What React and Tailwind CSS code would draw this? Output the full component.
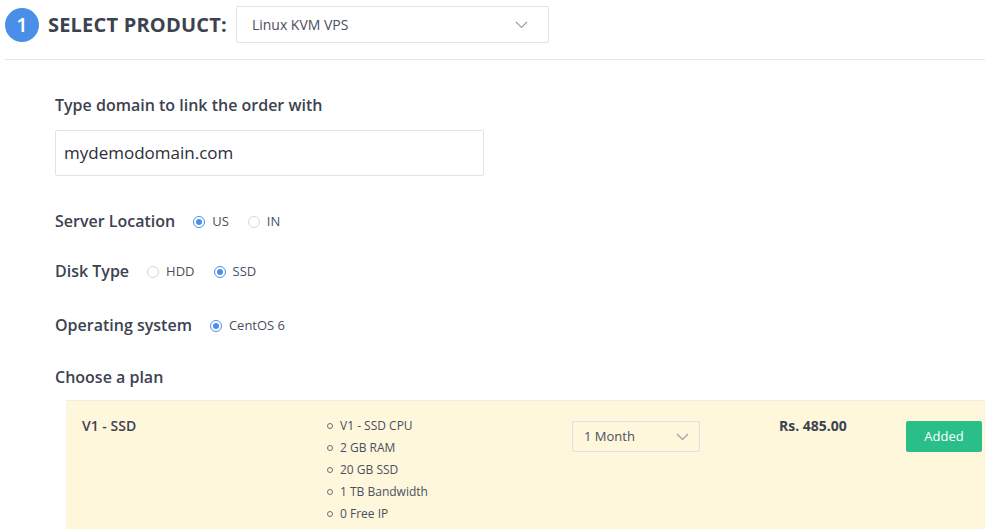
import React from 'react';

const Chevron = ({ className = '' }) => (
  <svg className={className} width="13" height="8" viewBox="0 0 13 8" fill="none">
    <path d="M1 1l5.5 5.5L12 1" stroke="#9aa0ab" strokeWidth="1.2" />
  </svg>
);

const Radio = ({ checked, label }) => (
  <label className="flex items-center gap-[7px] text-[13px] text-[#4a5060] pt-[1px]">
    <span
      className={`flex items-center justify-center w-[12px] h-[12px] rounded-full border ${
        checked ? 'border-[#4a8fe7]' : 'border-[#d4d6da]'
      } bg-white`}
    >
      {checked && <span className="w-[6px] h-[6px] rounded-full bg-[#4a8fe7]" />}
    </span>
    {label}
  </label>
);

const Row = ({ label, children, className = '' }) => (
  <div className={`flex items-center h-[20px] ${className}`}>
    <span className="text-[16px] font-semibold text-[#3d4250] mr-[18px]">{label}</span>
    <div className="flex items-center gap-[19px]">{children}</div>
  </div>
);

const features = ['V1 - SSD CPU', '2 GB RAM', '20 GB SSD', '1 TB Bandwidth', '0 Free IP'];

export default function App() {
  return (
    <div className="w-[985px] h-[529px] overflow-hidden bg-white font-['Open_Sans',sans-serif] text-[#3d4250]">
      {/* header */}
      <div className="flex items-center pl-[5px] pt-[6px]">
        <div className="w-[34px] h-[34px] rounded-full bg-[#4a8fe7] text-white flex items-center justify-center text-[20px] font-semibold">
          1
        </div>
        <h1 className="ml-[9px] text-[20px] font-bold tracking-[0.2px] uppercase text-[#3d4250]">Select Product:</h1>
        <div className="ml-[9px] w-[313px] h-[37px] border border-[#dfe1e5] rounded-[2px] flex items-center justify-between pl-[15px] pr-[20px] text-[14px] text-[#4a5060]">
          <span>Linux KVM VPS</span>
          <Chevron />
        </div>
      </div>
      <div className="ml-[5px] mt-[16px] border-t border-[#e5e6e8]" />

      <div className="pl-[55px] pt-[35px]">
        <div className="text-[16px] font-semibold h-[20px] leading-[20px]">Type domain to link the order with</div>
        <div className="mt-[15px] w-[429px] h-[46px] border border-[#e0e2e6] rounded-[2px] flex items-center pl-[8px] text-[17px] text-[#2b2f38]">
          mydemodomain.com
        </div>

        <Row label="Server Location" className="mt-[35px]">
          <Radio checked label="US" />
          <Radio label="IN" />
        </Row>
        <Row label="Disk Type" className="mt-[30px]">
          <Radio label="HDD" />
          <Radio checked label="SSD" />
        </Row>
        <Row label="Operating system" className="mt-[34px]">
          <Radio checked label="CentOS 6" />
        </Row>

        <div className="mt-[32px] h-[20px] leading-[20px] text-[16px] font-semibold">Choose a plan</div>

        <div className="ml-[11px] mt-[13px] bg-[#fef7dc] border-t border-[#efede4] flex pt-[13px] pb-[20px] pl-[16px]">
          <div className="w-[245px] text-[14px] font-semibold leading-[22px] pt-[1px]">V1 - SSD</div>
          <ul className="w-[245px] text-[12px] text-[#4a5060] pt-[1px]">
            {features.map((f) => (
              <li key={f} className="flex items-center h-[22px]">
                <span className="w-[6px] h-[6px] rounded-full border border-[#6b7080] mr-[7px]" />
                {f}
              </li>
            ))}
          </ul>
          <div className="w-[207px] pt-[7px]">
            <div className="w-[128px] h-[31px] border border-[#dfe1e5] rounded-[2px] bg-[#fef7dc] flex items-center justify-between pl-[11px] pr-[10px] text-[13px] text-[#4a5060]">
              <span>1 Month</span>
              <Chevron />
            </div>
          </div>
          <div className="w-[127px] text-[14px] font-bold leading-[22px] pt-[1px]">Rs. 485.00</div>
          <div className="pt-[7px]">
            <button className="w-[76px] h-[31px] rounded-[2px] bg-[#2abf88] text-white text-[13px]">Added</button>
          </div>
        </div>
      </div>
    </div>
  );
}
